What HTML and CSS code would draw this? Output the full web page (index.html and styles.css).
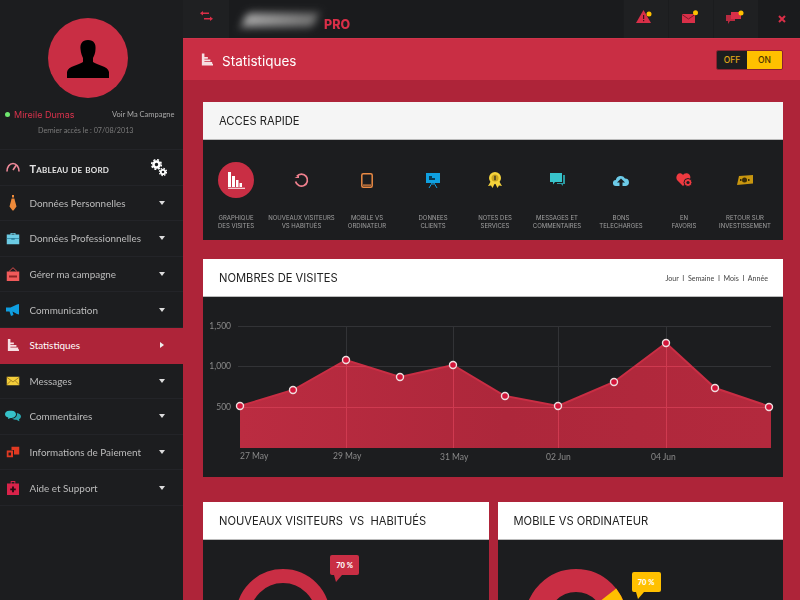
FILE: index.html
```html
<!DOCTYPE html>
<html lang="fr">
<head>
<meta charset="utf-8">
<title>Statistiques</title>
<link rel="stylesheet" href="styles.css">
</head>
<body>
<div class="app">
  <aside class="sidebar">
    <div class="profile">
      <div class="avatar">
        <svg width="42" height="38" viewBox="0 0 42 38"><path fill="#000" d="M21 0C15 0 13 4 13.5 9 13.8 13 15 16 16 18V22C12 25 1 26 0 32V38H42V32C41 26 30 25 26 22V18C27 16 28.5 13 28.5 9 29 4 27 0 21 0Z"/></svg>
      </div>
      <div class="who">
        <span class="dot"></span><span class="name">Mireile Dumas</span><span class="campaign">Voir Ma Campagne</span>
      </div>
      <div class="last">Dernier accès le : 07/08/2013</div>
    </div>
    <nav class="menu">
      <div class="row home">
        <svg class="ico" width="14" height="10" viewBox="0 0 14 10"><path fill="none" stroke="#f08a9a" stroke-width="1.6" d="M1 9.5C1 5 3.500 1.500 7 1.500S13 5 13 9.500M7 8L10 3.500"/></svg>
        <span class="label">Tableau de bord</span>
        <svg class="gears" width="16" height="18" viewBox="0 0 16 18"><g fill="none" stroke="#fff"><circle cx="5.500" cy="5.500" r="3" stroke-width="2.600"/><circle cx="5.500" cy="5.500" r="4.800" stroke-width="1.600" stroke-dasharray="2 1.770"/><circle cx="12" cy="13" r="2.200" stroke-width="1.800"/><circle cx="12" cy="13" r="3.600" stroke-width="1.200" stroke-dasharray="1.500 1.330"/></g></svg>
      </div>
      <div class="row">
        <svg class="ico" width="10" height="16" viewBox="0 0 10 16"><path fill="#ee8a3a" d="M4 0h2v2.500H4zM3.600 3.500h2.800l.6 2.500 1.500 5.500L5.500 15.500H4.500L1.500 11.500 3 6z"/></svg>
        <span class="label">Données Personnelles</span><span class="caret"></span>
      </div>
      <div class="row">
        <svg class="ico" width="13" height="13" viewBox="0 0 13 13"><path fill="#6ccbe4" d="M4 1.500h5v1.500h4v10H0V3h4zM5 2.300V3h3v-.700z"/><path fill="#2a7f9c" d="M0 6.500h13v.8H8.200v1H4.800v-1H0z"/></svg>
        <span class="label">Données Professionnelles</span><span class="caret"></span>
      </div>
      <div class="row">
        <svg class="ico" width="13" height="14" viewBox="0 0 13 14"><path fill="#f05a5a" d="M0 4.500h13V14H0z"/><path fill="none" stroke="#d84a4a" d="M2.500 4.500L6.500 .7l4 3.800"/><path fill="#8c2424" d="M2.500 8.500h8v2h-8z"/></svg>
        <span class="label">Gérer ma campagne</span><span class="caret"></span>
      </div>
      <div class="row">
        <svg class="ico" width="14" height="12" viewBox="0 0 14 12"><path fill="#0f9ee0" d="M0 3.500h4.500L11 .5 13 0v10.500L11 10 6.500 7.500 7.500 11 5 12 3.500 7.500H0z"/></svg>
        <span class="label">Communication</span><span class="caret"></span>
      </div>
      <div class="row active">
        <svg class="ico" width="12" height="13" viewBox="0 0 14 14"><path fill="#f6dfe3" d="M1 0h3v14H1zM4 4h4v2H4zM4 7h7v2H4zM4 10h9v2H4zM4 12h10v2H4z"/></svg>
        <span class="label">Statistiques</span><span class="caret right"></span>
      </div>
      <div class="row">
        <svg class="ico" width="13" height="9" viewBox="0 0 13 9"><path fill="#f4ce3a" d="M0 0h13v9H0z"/><path fill="none" stroke="#94721a" stroke-width=".8" d="M0 .5L6.500 5.500 13 .5M0 8.500L4.500 4M13 8.500L8.500 4"/></svg>
        <span class="label">Messages</span><span class="caret"></span>
      </div>
      <div class="row">
        <svg class="ico" width="16" height="11" viewBox="0 0 16 11"><path fill="#36c2c9" d="M5.500 0C8.500 0 11 1.500 11 3.800S8.500 7.500 5.500 7.500L3 8.500 3.300 7C1 6.500 0 5.300 0 3.800 0 1.500 2.500 0 5.500 0Z"/><path fill="#2aa8b0" d="M11.800 2.500C14.300 3 16 4.300 16 6 16 7.200 15 8.300 14 8.800L14.500 11 11.500 9.300C9.500 9.300 8 8.800 7 8 10 8 12.800 6 11.800 2.500Z"/></svg>
        <span class="label">Commentaires</span><span class="caret"></span>
      </div>
      <div class="row">
        <svg class="ico" width="13" height="11" viewBox="0 0 13 11"><path fill="#e03a22" d="M5 0h8v8H7.500V3.500H5z"/><path fill="#e03a22" fill-rule="evenodd" d="M0 4h6.500v7H0zM2 6v3h2.500V6z"/></svg>
        <span class="label">Informations de Paiement</span><span class="caret"></span>
      </div>
      <div class="row">
        <svg class="ico" width="12" height="14" viewBox="0 0 13 15"><path fill="#d9234a" d="M4 0h5v2.500h4V15H0V2.500h4zM5 1v1.500h3V1z"/><path fill="#2a0a12" d="M5.500 6h2v2h2v2h-2v2h-2v-2h-2V8h2z"/></svg>
        <span class="label">Aide et Support</span><span class="caret"></span>
      </div>
    </nav>
  </aside>

  <main class="main">
    <header class="topbar">
      <div class="tile swap">
        <svg width="13" height="10" viewBox="0 0 13 10"><path fill="#d92f48" d="M3 0v1.500h6v1.500H3V4.500L0 2.200zM10 5.500v1.500H4v1.500h6V10l3-2.300z"/></svg>
      </div>
      <div class="brand"><span class="logo"></span><span class="pro">PRO</span></div>
      <div class="alerts">
        <div class="alert">
          <svg width="20" height="14" viewBox="0 0 20 14"><path fill="#d92f48" d="M7.500 0L15 13H0z"/><path fill="#3a1018" d="M7 5h1.200v4H7zM7 10h1.200v1.300H7z"/><circle cx="13" cy="4" r="2.500" fill="#ffc000"/></svg>
        </div>
        <div class="alert">
          <svg width="20" height="14" viewBox="0 0 20 14"><path fill="#d92f48" d="M1 4h13v9H1z"/><path fill="none" stroke="#7a1a2a" d="M1 4.500L7.500 9 14 4.500"/><circle cx="14.500" cy="2.800" r="2.500" fill="#ffc000"/></svg>
        </div>
        <div class="alert">
          <svg width="20" height="14" viewBox="0 0 20 14"><path fill="#b82a40" d="M0 5h9v6H4l-2 3v-3H0z"/><path fill="#d92f48" d="M5 2h10v7H5z"/><circle cx="15" cy="3" r="2.500" fill="#ffc000"/></svg>
        </div>
      </div>
      <div class="close">
        <svg width="8" height="8" viewBox="0 0 8 8"><path stroke="#d92f48" stroke-width="2" d="M1 1l6 6M7 1L1 7"/></svg>
      </div>
    </header>

    <section class="titlebar">
      <svg width="12" height="13" viewBox="0 0 14 14"><path fill="#f6dfe3" d="M1 0h3v14H1zM4 4h4v2H4zM4 7h7v2H4zM4 10h9v2H4zM4 12h10v2H4z"/></svg>
      <h1 class="title">Statistiques</h1>
      <div class="toggle"><span class="off">OFF</span><span class="on">ON</span></div>
    </section>

    <div class="content">
      <section class="panel quick">
        <div class="head light"><h2>ACCES RAPIDE</h2></div>
        <div class="shortcuts">
          <div class="shortcut">
            <div class="badge"><svg width="18" height="17" viewBox="0 0 18 17"><path fill="#fff" d="M1 0h3v15H1zM5 4h3v11H5zM9 8h2.500v7H9zM12.500 11H15v4h-2.500zM1 15.800h17v1H1z"/></svg></div>
            <p>GRAPHIQUE<br>DES VISITES</p>
          </div>
          <div class="shortcut">
            <div class="glyph"><svg width="15" height="15" viewBox="0 0 15 15"><path fill="none" stroke="#f0808e" stroke-width="1.700" d="M2.800 3.300A6 6 0 1 1 1.600 8.500"/><path fill="#f0808e" d="M.5 5h4.500V2.500z"/></svg></div>
            <p>NOUVEAUX VISITEURS<br>VS HABITUÉS</p>
          </div>
          <div class="shortcut">
            <div class="glyph"><svg width="12" height="15" viewBox="0 0 12 15"><rect x=".8" y=".8" width="10.400" height="13.400" rx="1.500" fill="none" stroke="#ea8a44" stroke-width="1.500"/><path fill="#ea8a44" d="M2 11.500h8v1.200H2z"/></svg></div>
            <p>MOBILE VS<br>ORDINATEUR</p>
          </div>
          <div class="shortcut">
            <div class="glyph"><svg width="14" height="16" viewBox="0 0 14 16"><path fill="#0fa0e0" d="M0 1h14v10H0z"/><path fill="#0a3a52" d="M3 4h3v2h3v2H3z"/><path fill="none" stroke="#0fa0e0" d="M7 11v2M6 11l-3 5M8 11l3 5"/></svg></div>
            <p>DONNEES<br>CLIENTS</p>
          </div>
          <div class="shortcut">
            <div class="glyph"><svg width="14" height="16" viewBox="0 0 14 16"><path fill="#f5d33c" d="M3 9l-3 5 3-.5L4.500 16 7 11l2.500 5 1.500-2.500 3 .5-3-5z"/><circle cx="7" cy="6" r="6" fill="#f5d33c"/><circle cx="7" cy="6" r="3.500" fill="#c9a41e"/><path fill="#222" d="M6.400 3.800h1.200v4.400H6.400z"/></svg></div>
            <p>NOTES DES<br>SERVICES</p>
          </div>
          <div class="shortcut">
            <div class="glyph"><svg width="15" height="14" viewBox="0 0 15 14"><path fill="#38c4cb" d="M0 0h12v9H5l-2 2.500V9H0z"/><path fill="#2a9aa2" d="M13 2h2v9h-2v2l-2-2H7v-1h6z"/></svg></div>
            <p>MESSAGES ET<br>COMMENTAIRES</p>
          </div>
          <div class="shortcut">
            <div class="glyph"><svg width="16" height="11" viewBox="0 0 16 11"><path fill="#6ccbe8" d="M3 11A3 3 0 0 1 2.800 5 5 5 0 0 1 12 3.500 3.800 3.800 0 0 1 13 11H9.500V7.500H12L8 3.500 4 7.500h2.500V11z"/></svg></div>
            <p>BONS<br>TELECHARGES</p>
          </div>
          <div class="shortcut">
            <div class="glyph"><svg width="16" height="14" viewBox="0 0 16 14"><path fill="#ef3a40" d="M7 13L1 7C-1 3.500 2-.5 5 .5 6 .8 6.700 1.500 7 2 7.500 1.200 9 0 11 .3 14 .8 15 4 14 6z"/><circle cx="12" cy="9.500" r="4" fill="#ef3a40" stroke="#1c1d20"/><circle cx="12" cy="9.500" r="1.600" fill="#1c1d20"/></svg></div>
            <p>EN<br>FAVORIS</p>
          </div>
          <div class="shortcut">
            <div class="glyph"><svg width="16" height="10" viewBox="0 0 16 10"><path fill="#c8960f" d="M2 1l14-1v8.500L0 10z"/><circle cx="7.500" cy="5" r="2.500" fill="#3a2c06"/><path fill="#3a2c06" d="M3 4h1.500v2H3zM11 4h1.500v2H11z"/></svg></div>
            <p>RETOUR SUR<br>INVESTISSEMENT</p>
          </div>
        </div>
      </section>

      <section class="panel visits">
        <div class="head"><h2>NOMBRES DE VISITES</h2><span class="range">Jour&nbsp; I&nbsp; Semaine&nbsp; I&nbsp; Mois&nbsp; I&nbsp; Année</span></div>
        <div class="chartbody">
          <svg class="chart" width="580" height="180" viewBox="203 297 580 180">
            <defs>
              <clipPath id="under"><path d="M240 406L293 390 346 360 400 377 453 365 505 396 558 406 614 382 666 343 715 388 771 407V448H240Z"/></clipPath>
              <linearGradient id="fill" x1="0" y1="0" x2="1" y2="0"><stop offset="0" stop-color="#bb2c41"/><stop offset=".5" stop-color="#ad273b"/><stop offset="1" stop-color="#b3293d"/></linearGradient>
            </defs>
            <g class="grid">
              <path d="M238 326.500H771M238 366.500H771M238 407.500H771M346.500 326V448M453.500 326V448M558.500 326V448M666.500 326V448"/>
            </g>
            <path d="M240 406L293 390 346 360 400 377 453 365 505 396 558 406 614 382 666 343 715 388 771 407V448H240Z" fill="url(#fill)"/>
            <path class="edge" d="M240 406L293 390 346 360 400 377 453 365 505 396 558 406 614 382 666 343 715 388 771 407"/>
            <g class="gridred" clip-path="url(#under)">
              <path d="M238 366.500H771M238 407.500H771M346.500 326V448M453.500 326V448M558.500 326V448M666.500 326V448"/>
            </g>
            <g class="pts">
              <circle cx="240" cy="406" r="3.500"/><circle cx="293" cy="390" r="3.500"/><circle cx="346" cy="360" r="3.500"/><circle cx="400" cy="377" r="3.500"/><circle cx="453" cy="365" r="3.500"/><circle cx="505" cy="396" r="3.500"/><circle cx="558" cy="406" r="3.500"/><circle cx="614" cy="382" r="3.500"/><circle cx="666" cy="343" r="3.500"/><circle cx="715" cy="388" r="3.500"/><circle cx="769" cy="407" r="3.500"/>
            </g>
            <g class="ylab">
              <text x="231" y="329">1,500</text><text x="231" y="369">1,000</text><text x="231" y="410">500</text>
            </g>
            <g class="xlab">
              <text x="240" y="459">27 May</text><text x="333" y="459">29 May</text><text x="440" y="460">31 May</text><text x="546" y="460">02 Jun</text><text x="651" y="460">04 Jun</text>
            </g>
          </svg>
        </div>
      </section>

      <div class="pair">
        <section class="panel half">
          <div class="head"><h2>NOUVEAUX VISITEURS&nbsp; VS&nbsp; HABITUÉS</h2></div>
          <div class="donutbody first">
            <svg class="donut" width="94" height="94" viewBox="0 0 94 94"><circle cx="47" cy="47" r="40" fill="none" stroke="#c92e44" stroke-width="14"/></svg>
            <div class="tip red">70 %</div>
          </div>
        </section>
        <section class="panel half">
          <div class="head"><h2>MOBILE VS ORDINATEUR</h2></div>
          <div class="donutbody second">
            <svg class="donut" width="102" height="102" viewBox="0 0 102 102"><circle cx="51" cy="51" r="39.500" fill="none" stroke="#c92e44" stroke-width="23"/><path fill="#ffc000" d="M91.200 19.600A51 51 0 0 1 102 51H79A28 28 0 0 0 73 33.800Z"/></svg>
            <div class="tip yellow">70 %</div>
          </div>
        </section>
      </div>
    </div>
  </main>
</div>
</body>
</html>
```
FILE: styles.css
```css
* { box-sizing: border-box; }
html, body { margin: 0; padding: 0; height: 100%; overflow: hidden; }
body { font-family: "Lato", "Liberation Sans", sans-serif; background: #ae2439; }
h1, h2, p { margin: 0; font-weight: 400; }

.app { display: flex; width: 800px; height: 600px; overflow: hidden; filter: blur(.25px); }

/* Sidebar */
.sidebar { width: 183px; flex: none; background: #1c1d1f; height: 600px; }
.profile { height: 149px; padding-top: 18px; }
.avatar { width: 80px; height: 80px; margin: 0 auto 0 48px; border-radius: 50%; background: #c92e44; display: flex; align-items: flex-start; justify-content: center; padding-top: 22px; padding-right: 1px; }
.who { display: flex; align-items: center; margin-top: 9px; padding-left: 5px; height: 14px; }
.dot { width: 5px; height: 5px; border-radius: 50%; background: #6fe86f; margin-right: 4px; }
.name { color: #d8324c; font-family: "Inter", sans-serif; font-size: 9px; width: 98px; white-space: nowrap; }
.campaign { color: #a8a8a8; font-size: 7.500px; white-space: nowrap; }
.last { color: #7a7a7a; font-size: 7.200px; margin-top: 5px; padding-left: 38px; white-space: nowrap; }

.menu { border-top: 1px solid #232428; }
.row { position: relative; display: flex; align-items: center; height: 35.6px; padding-left: 29.500px; padding-right: 18px; border-bottom: 1px solid #232428; }
.row .ico { position: absolute; left: 13px; top: 50%; transform: translate(-50%, -50%); }
.label { flex: 1; color: #bcbcbc; font-size: 9.900px; white-space: nowrap; }
.home .label { font-weight: 700; font-variant: small-caps; color: #e2e2e2; font-size: 11px; letter-spacing: .2px; padding-top: 2px; }
.gears { margin-right: -2px; margin-top: 1px; }
.caret { width: 0; height: 0; border-left: 3px solid transparent; border-right: 3px solid transparent; border-top: 4px solid #ddd; }
.caret.right { border-top: 3px solid transparent; border-bottom: 3px solid transparent; border-left: 4px solid #eee; border-right: 0; margin-right: 1px; }
.row.active { background: #ae2439; border-bottom-color: #ae2439; }
.row.active .label { color: #fff; }

/* Main */
.main { flex: 1; min-width: 0; height: 600px; overflow: hidden; }
.topbar { display: flex; align-items: stretch; height: 38px; background: #1a1b1d; }
.tile { background: #1f2022; display: flex; align-items: center; justify-content: center; }
.swap { width: 46px; padding-bottom: 6px; }
.brand { flex: 1; display: flex; align-items: flex-end; padding-bottom: 7px; padding-left: 15px; position: relative; }
.logo { width: 72px; height: 14px; margin-bottom: 4px; background: linear-gradient(90deg, #a8a8a8, #707070); filter: blur(4px); transform: skewX(-18deg); }
.pro { color: #d92f48; font-family: "Inter", sans-serif; font-weight: 800; font-size: 12.500px; margin-left: 8px; margin-bottom: -1px; }
.alerts { display: flex; width: 135px; background: #1f2022; }
.alert { flex: 1; display: flex; align-items: center; justify-content: center; border-left: 1px solid #1b1c1e; padding-bottom: 4px; }
.close { width: 42px; display: flex; align-items: center; justify-content: center; padding: 0 0 0 5px; }

.titlebar { display: flex; align-items: center; height: 42px; background: #c92e44; padding-left: 18px; padding-right: 17px; border-top: 1px solid #d0334a; }
.title { flex: 1; margin-left: 9px; color: #fff; font-family: "Inter", sans-serif; font-size: 13.500px; padding-top: 2px; }
.toggle { display: flex; width: 67px; height: 20px; border: 1px solid #8a2230; border-radius: 2px; font-family: "Inter", sans-serif; font-size: 8.500px; font-weight: 500; overflow: hidden; }
.off { width: 30px; background: #1c1d1f; color: #e0a818; display: flex; align-items: center; justify-content: center; }
.on { flex: 1; background: #ffc000; color: #4a3200; display: flex; align-items: center; justify-content: center; }

.content { padding: 22px 17px 0 20px; }
.panel { background: #1c1d1f; }
.head { display: flex; align-items: center; justify-content: space-between; height: 38px; background: #fff; padding: 1px 15px 0 16px; border-bottom: 1px solid #bbb; }
.head.light { background: #f5f5f5; }
.head h2 { font-family: "Inter", sans-serif; font-size: 11.200px; color: #222; white-space: nowrap; }
.range { font-size: 7.100px; color: #444; white-space: nowrap; }

.quick { height: 138px; }
.shortcuts { display: grid; grid-template-columns: 66px 65px 66px 66px 58px 66px 62px 64px 58px; padding-top: 22px; }
.shortcut { text-align: center; display: flex; flex-direction: column; align-items: center; }
.badge { width: 36px; height: 36px; border-radius: 50%; background: #c92e44; display: flex; align-items: center; justify-content: center; }
.glyph { height: 36px; display: flex; align-items: center; justify-content: center; }
.shortcut p { margin-top: 16px; font-family: "Inter", sans-serif; font-size: 6px; line-height: 8px; color: #a0a0a0; white-space: nowrap; }

.visits { margin-top: 19px; }
.chartbody { height: 180px; }
.chart { display: block; }
.grid path { fill: none; stroke: #323336; stroke-width: 1; }
.gridred path { fill: none; stroke: #cf3a50; stroke-width: 1; }
.edge { fill: none; stroke: #c92e44; stroke-width: 2; }
.pts circle { fill: #d3163a; stroke: #efdfe0; stroke-width: 1.400; }
.ylab text, .xlab text { font-family: "Lato", sans-serif; font-size: 8.500px; fill: #8a8a8a; }
.ylab text { text-anchor: end; }

.pair { display: flex; gap: 9px; margin-top: 25px; }
.half { flex: 1; min-width: 0; }
.donutbody { position: relative; height: 120px; }
.donut { position: absolute; display: block; }
.first .donut { left: 33px; top: 29px; }
.second .donut { left: 27px; top: 29px; }
.tip { position: absolute; width: 29px; height: 20px; border-radius: 2px; font-size: 7.500px; font-weight: 900; color: #fff; display: flex; align-items: center; justify-content: center; }
.tip::after { content: ""; position: absolute; left: 4px; bottom: -7px; width: 0; height: 0; border-left: 2px solid transparent; border-right: 6px solid transparent; border-top: 7px solid; }
.tip.red { background: #c92e44; left: 127px; top: 15px; }
.tip.red::after { color: #c92e44; }
.tip.yellow { background: #ffc000; left: 134px; top: 32px; }
.tip.yellow::after { color: #ffc000; }
```
